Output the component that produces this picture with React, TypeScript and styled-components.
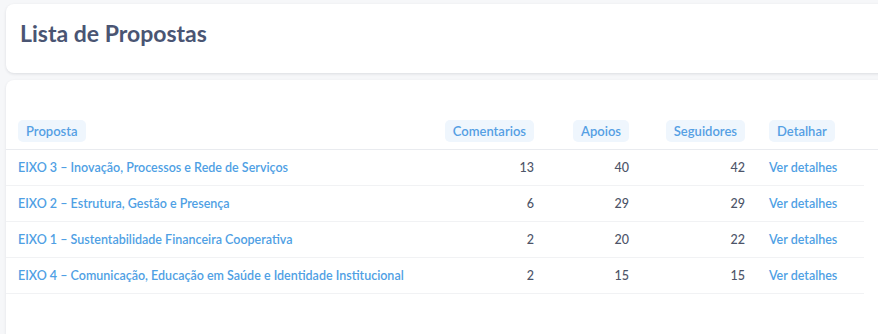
import styled, { createGlobalStyle } from "styled-components";

const GlobalStyle = createGlobalStyle`
  body {
    margin: 0;
    background: #f6f7f9;
    font-family: Lato, "Noto Sans", sans-serif;
    overflow: hidden;
  }
`;

interface Proposta {
  id: number;
  titulo: string;
  comentarios: number;
  apoios: number;
  seguidores: number;
}

const propostas: Proposta[] = [
  { id: 3, titulo: "EIXO 3 – Inovação, Processos e Rede de Serviços", comentarios: 13, apoios: 40, seguidores: 42 },
  { id: 2, titulo: "EIXO 2 – Estrutura, Gestão e Presença", comentarios: 6, apoios: 29, seguidores: 29 },
  { id: 1, titulo: "EIXO 1 – Sustentabilidade Financeira Cooperativa", comentarios: 2, apoios: 20, seguidores: 22 },
  { id: 4, titulo: "EIXO 4 – Comunicação, Educação em Saúde e Identidade Institucional", comentarios: 2, apoios: 15, seguidores: 15 },
];

const columns = "428px 112px 95px 116px 107px";

function App() {
  return (
    <Page>
      <GlobalStyle />
      <Card>
        <Title>Lista de Propostas</Title>
      </Card>
      <TableCard>
        <HeaderRow>
          <HeadCell>
            <Pill>Proposta</Pill>
          </HeadCell>
          <HeadCell align="right">
            <Pill>Comentarios</Pill>
          </HeadCell>
          <HeadCell align="right">
            <Pill>Apoios</Pill>
          </HeadCell>
          <HeadCell align="right">
            <Pill>Seguidores</Pill>
          </HeadCell>
          <HeadCell>
            <Pill>Detalhar</Pill>
          </HeadCell>
        </HeaderRow>
        {propostas.map((p) => (
          <Row key={p.id}>
            <Cell>
              <Link href="#">{p.titulo}</Link>
            </Cell>
            <Number>{p.comentarios}</Number>
            <Number>{p.apoios}</Number>
            <Number>{p.seguidores}</Number>
            <Cell>
              <Link href="#">Ver detalhes</Link>
            </Cell>
          </Row>
        ))}
      </TableCard>
    </Page>
  );
}

const Page = styled.div`
  display: flex;
  flex-direction: column;
  gap: 7px;
  padding: 4px 0 0 6px;
  width: 900px;
`;

const Card = styled.div`
  background: #fff;
  border-radius: 8px;
  box-shadow: 0 1px 3px rgba(30, 40, 60, 0.12);
  padding: 14px 14px 0;
  height: 69px;
  box-sizing: border-box;
`;

const Title = styled.h1`
  margin: 0;
  font-size: 23px;
  line-height: 30px;
  font-weight: 700;
  color: #4a5573;
`;

const TableCard = styled.div`
  background: #fff;
  border-radius: 8px 8px 0 0;
  box-shadow: 0 1px 3px rgba(30, 40, 60, 0.1);
  padding-top: 32px;
  height: 222px;
`;

const HeaderRow = styled.div`
  display: grid;
  grid-template-columns: ${columns};
  border-bottom: 1px solid #e9ebef;
  padding: 8px 0 7px;
`;

const HeadCell = styled.div<{ align?: "left" | "right" }>`
  display: flex;
  justify-content: ${(p) => (p.align === "right" ? "flex-end" : "flex-start")};
  padding: 0 12px;
`;

const Pill = styled.span`
  display: inline-block;
  background: #eff6fd;
  color: #559fe4;
  font-size: 13px;
  font-weight: 600;
  line-height: 22px;
  padding: 0 8px;
  border-radius: 5px;
`;

const Row = styled.div`
  display: grid;
  grid-template-columns: ${columns};
  width: 858px;
  height: 35px;
  align-items: center;
  border-bottom: 1px solid #f1f2f4;
  font-size: 12.5px;
`;

const Cell = styled.div`
  padding: 0 12px;
  white-space: nowrap;
`;

const Number = styled(Cell)`
  text-align: right;
  color: #4d5468;
  font-weight: 500;
`;

const Link = styled.a`
  color: #4f9fe4;
  font-weight: 600;
  text-decoration: none;
`;

export default App;
